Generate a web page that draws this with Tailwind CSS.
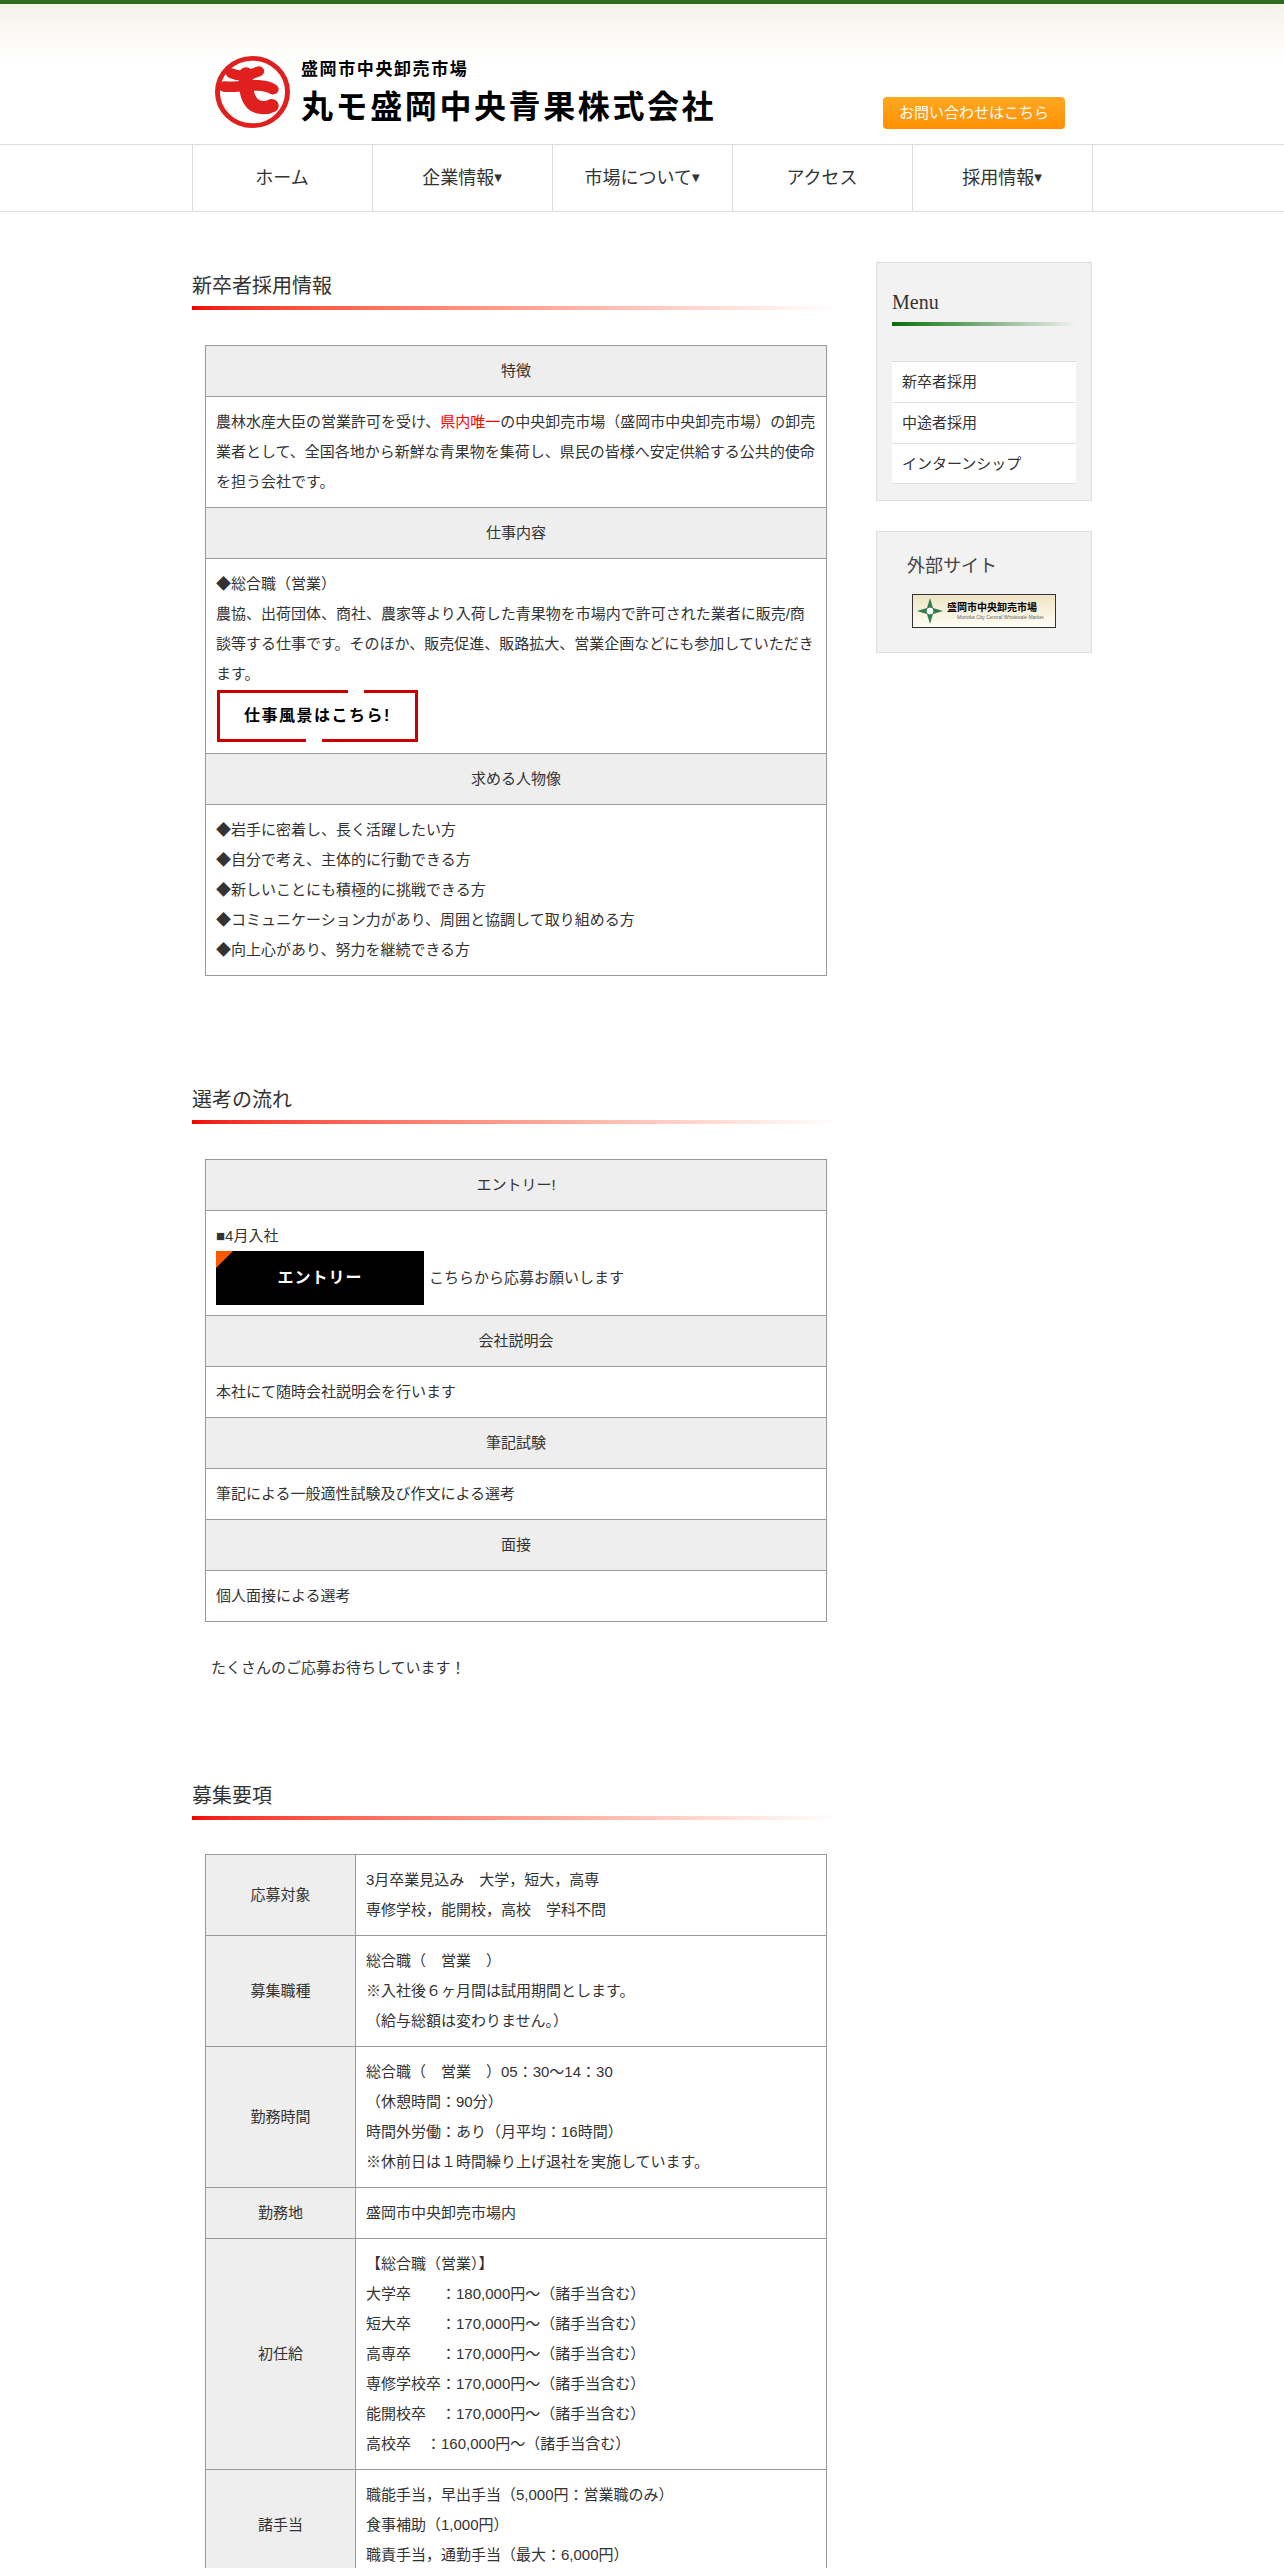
<!DOCTYPE html>
<html lang="ja">
<head>
    <meta charset="UTF-8">
    <title>新卒者採用情報 - 丸モ盛岡中央青果株式会社</title>
    <script src="https://cdn.jsdelivr.net/npm/@tailwindcss/browser@4"></script>
</head>
<body class="bg-white text-[#333] text-[15px] leading-[30px] font-['Liberation_Sans','Noto_Sans_CJK_JP',sans-serif]">
<div class="h-[2568px] overflow-hidden">

    <!-- header -->
    <header class="h-[144px] border-t-4 border-[#2f6b1c] bg-linear-to-b from-[#f5f2ea] to-white to-[40%]">
        <div class="w-[900px] mx-auto flex relative">
            <div class="ml-[23px] mt-[52px] w-[75px] h-[72px] shrink-0">
                <svg width="75" height="72" viewBox="0 0 212 217" preserveAspectRatio="none" fill="none" stroke="#e0201f" stroke-linecap="round" stroke-linejoin="round">
                    <ellipse cx="106" cy="108.500" rx="99" ry="101.500" fill="#fff" stroke-width="14"/>
                    <path d="M46 52 C70 64 100 58 124 46" stroke-width="30"/>
                    <path d="M26 92 C60 98 125 76 164 100" stroke-width="32"/>
                    <path d="M88 54 C84 100 92 146 124 154 C140 157 150 156 160 150" stroke-width="40"/>
                </svg>
            </div>
            <div class="ml-[11px] mt-[52px] text-black font-bold whitespace-nowrap">
                <div class="text-[17px] leading-[24px] tracking-[1.6px] font-['Noto_Sans_CJK_JP',sans-serif]">盛岡市中央卸売市場</div>
                <div class="text-[32px] leading-[50px] mt-[-1px] tracking-[2.6px] font-['Noto_Sans_CJK_JP',sans-serif]">丸モ盛岡中央青果株式会社</div>
            </div>
            <a href="#" class="absolute left-[691px] top-[93px] w-[182px] h-[32px] rounded bg-linear-to-b from-[#ffa81f] to-[#ff8f00] text-white text-center text-[15px] leading-[32px]">お問い合わせはこちら</a>
        </div>
    </header>

    <!-- nav -->
    <nav class="h-[68px] border-y border-[#ddd]">
        <div class="w-[901px] mx-auto flex h-full border-l border-[#ddd] text-[18px] leading-[66px] text-center">
            <a href="#" class="w-[180px] border-r border-[#ddd]">ホーム</a>
            <a href="#" class="w-[180px] border-r border-[#ddd]">企業情報<span class="text-[10px] align-[3px] font-['DejaVu_Sans',sans-serif]">▼</span></a>
            <a href="#" class="w-[180px] border-r border-[#ddd]">市場について<span class="text-[10px] align-[3px] font-['DejaVu_Sans',sans-serif]">▼</span></a>
            <a href="#" class="w-[180px] border-r border-[#ddd]">アクセス</a>
            <a href="#" class="w-[180px] border-r border-[#ddd]">採用情報<span class="text-[10px] align-[3px] font-['DejaVu_Sans',sans-serif]">▼</span></a>
        </div>
    </nav>

    <div class="w-[900px] mx-auto flex justify-between">

        <!-- main column -->
        <main class="w-[644px] pt-[58px]">
            <h2 class="text-[20px] leading-[32px] font-normal h-[40px] bg-linear-to-r from-[#f00000] to-white bg-no-repeat bg-bottom bg-size-[100%_4px]">新卒者採用情報</h2>
            <table class="mt-[35px] ml-[13px] w-[622px] border-collapse">
                <tr><th class="border border-[#999] bg-[#eee] p-[10px] font-normal">特徴</th></tr>
                <tr><td class="border border-[#999] p-[10px]">農林水産大臣の営業許可を受け、<span class="text-[#f00]">県内唯一</span>の中央卸売市場（盛岡市中央卸売市場）の卸売業者として、全国各地から新鮮な青果物を集荷し、県民の皆様へ安定供給する公共的使命を担う会社です。</td></tr>
                <tr><th class="border border-[#999] bg-[#eee] p-[10px] font-normal">仕事内容</th></tr>
                <tr><td class="border border-[#999] p-[10px]">
                    ◆総合職（営業）<br>
                    農協、出荷団体、商社、農家等より入荷した青果物を市場内で許可された業者に販売/商談等する仕事です。そのほか、販売促進、販路拡大、営業企画などにも参加していただきます。
                    <a href="#" class="block relative mt-px mb-px ml-px w-[201px] h-[52px] border-[3px] border-[#cc0000] text-center text-black font-bold text-[16px] leading-[46px] tracking-[1.5px]">
                        仕事風景はこちら!
                        <span class="absolute left-[128px] top-[-3px] w-[16px] h-[3px] bg-white"></span>
                        <span class="absolute left-[86px] bottom-[-3px] w-[16px] h-[3px] bg-white"></span>
                    </a>
                </td></tr>
                <tr><th class="border border-[#999] bg-[#eee] p-[10px] font-normal">求める人物像</th></tr>
                <tr><td class="border border-[#999] p-[10px]">
                    ◆岩手に密着し、長く活躍したい方<br>
                    ◆自分で考え、主体的に行動できる方<br>
                    ◆新しいことにも積極的に挑戦できる方<br>
                    ◆コミュニケーション力があり、周囲と協調して取り組める方<br>
                    ◆向上心があり、努力を継続できる方
                </td></tr>
            </table>

            <h2 class="mt-[108px] text-[20px] leading-[32px] font-normal h-[40px] bg-linear-to-r from-[#f00000] to-white bg-no-repeat bg-bottom bg-size-[100%_4px]">選考の流れ</h2>
            <table class="mt-[35px] ml-[13px] w-[622px] border-collapse">
                <tr><th class="border border-[#999] bg-[#eee] p-[10px] font-normal">エントリー!</th></tr>
                <tr><td class="border border-[#999] p-[10px]">
                    ■4月入社
                    <div class="flex items-center gap-[5px]">
                        <a href="#" class="block relative w-[208px] h-[54px] bg-black text-white text-center font-bold text-[16px] leading-[54px] tracking-[1px]">
                            <span class="absolute left-0 top-0 border-t-[17px] border-r-[17px] border-t-[#ff5a00] border-r-transparent"></span>
                            エントリー
                        </a>
                        <span>こちらから応募お願いします</span>
                    </div>
                </td></tr>
                <tr><th class="border border-[#999] bg-[#eee] p-[10px] font-normal">会社説明会</th></tr>
                <tr><td class="border border-[#999] p-[10px]">本社にて随時会社説明会を行います</td></tr>
                <tr><th class="border border-[#999] bg-[#eee] p-[10px] font-normal">筆記試験</th></tr>
                <tr><td class="border border-[#999] p-[10px]">筆記による一般適性試験及び作文による選考</td></tr>
                <tr><th class="border border-[#999] bg-[#eee] p-[10px] font-normal">面接</th></tr>
                <tr><td class="border border-[#999] p-[10px]">個人面接による選考</td></tr>
            </table>
            <p class="mt-[31px] ml-[19px]">たくさんのご応募お待ちしています！</p>

            <h2 class="mt-[97px] text-[20px] leading-[32px] font-normal h-[40px] bg-linear-to-r from-[#f00000] to-white bg-no-repeat bg-bottom bg-size-[100%_4px]">募集要項</h2>
            <table class="mt-[34px] ml-[13px] w-[622px] border-collapse">
                <tr>
                    <th class="w-[150px] border border-[#999] bg-[#eee] p-[10px] font-normal">応募対象</th>
                    <td class="border border-[#999] p-[10px]">3月卒業見込み　大学，短大，高専<br>専修学校，能開校，高校　学科不問</td>
                </tr>
                <tr>
                    <th class="border border-[#999] bg-[#eee] p-[10px] font-normal">募集職種</th>
                    <td class="border border-[#999] p-[10px]">総合職（　営業　）<br>※入社後６ヶ月間は試用期間とします。<br>（給与総額は変わりません。）</td>
                </tr>
                <tr>
                    <th class="border border-[#999] bg-[#eee] p-[10px] font-normal">勤務時間</th>
                    <td class="border border-[#999] p-[10px]">総合職（　営業　）05：30～14：30<br>（休憩時間：90分）<br>時間外労働：あり（月平均：16時間）<br>※休前日は１時間繰り上げ退社を実施しています。</td>
                </tr>
                <tr>
                    <th class="border border-[#999] bg-[#eee] p-[10px] font-normal">勤務地</th>
                    <td class="border border-[#999] p-[10px]">盛岡市中央卸売市場内</td>
                </tr>
                <tr>
                    <th class="border border-[#999] bg-[#eee] p-[10px] font-normal">初任給</th>
                    <td class="border border-[#999] p-[10px]">【総合職（営業）】<br>大学卒　　：180,000円～（諸手当含む）<br>短大卒　　：170,000円～（諸手当含む）<br>高専卒　　：170,000円～（諸手当含む）<br>専修学校卒：170,000円～（諸手当含む）<br>能開校卒　：170,000円～（諸手当含む）<br>高校卒　：160,000円～（諸手当含む）</td>
                </tr>
                <tr>
                    <th class="border border-[#999] bg-[#eee] p-[10px] font-normal">諸手当</th>
                    <td class="border border-[#999] p-[10px]">職能手当，早出手当（5,000円：営業職のみ）<br>食事補助（1,000円）<br>職責手当，通勤手当（最大：6,000円）</td>
                </tr>
            </table>
        </main>

        <!-- sidebar -->
        <aside class="w-[216px] pt-[50px]">
            <div class="h-[239px] border border-[#ddd] bg-[#f2f2f2] px-[15px]">
                <h3 class="pt-[23px] h-[63px] font-['Liberation_Serif',serif] text-[20px] leading-[32px] font-normal bg-linear-to-r from-[#0b6e0b] to-transparent bg-no-repeat bg-bottom bg-size-[100%_4px]">Menu</h3>
                <ul class="mt-[35px] bg-white">
                    <li class="h-[41px] border-t border-[#ddd] pl-[10px] leading-[40px]"><a href="#">新卒者採用</a></li>
                    <li class="h-[41px] border-t border-[#ddd] pl-[10px] leading-[40px]"><a href="#">中途者採用</a></li>
                    <li class="h-[41px] border-y border-[#ddd] pl-[10px] leading-[40px]"><a href="#">インターンシップ</a></li>
                </ul>
            </div>
            <div class="mt-[30px] h-[122px] border border-[#ddd] bg-[#f2f2f2] pl-[30px] pt-[19px]">
                <h3 class="text-[18px] leading-[30px] font-normal text-[#444]">外部サイト</h3>
                <a href="#" class="mt-[13px] ml-[5px] flex items-center w-[144px] h-[34px] border border-[#333] bg-linear-to-b from-[#eee4c4] to-[#fffdf5] text-black">
                    <svg class="ml-[4px] shrink-0" width="26" height="26" viewBox="0 0 26 26">
                        <path d="M13 0 L16 10 L26 13 L16 16 L13 26 L10 16 L0 13 L10 10 Z" fill="#2f7d4f"/>
                        <circle cx="13" cy="13" r="4" fill="#fff" stroke="#2f7d4f"/>
                    </svg>
                    <div class="ml-[4px] whitespace-nowrap">
                        <div class="text-[10px] leading-[12px] font-bold">盛岡市中央卸売市場</div>
                        <div class="ml-[10px] text-[5px] leading-[7px] text-[#666]">Morioka City Central Wholesale Market</div>
                    </div>
                </a>
            </div>
        </aside>
    </div>
</div>
</body>
</html>
